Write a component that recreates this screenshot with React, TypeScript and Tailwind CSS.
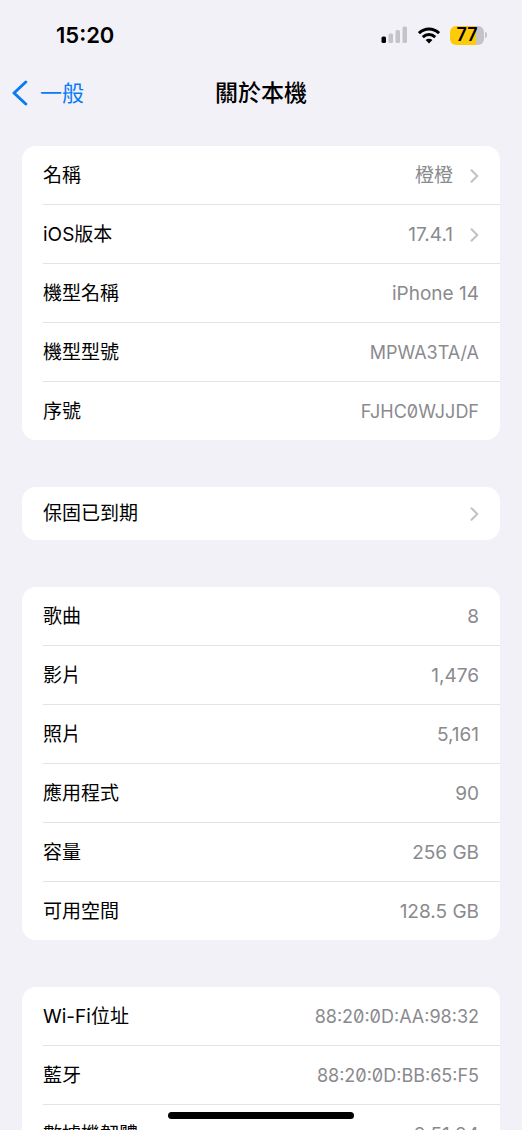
import React from 'react';

interface InfoRow {
  label: string;
  value?: string;
  link?: boolean;
  code?: boolean;
}

const groups: InfoRow[][] = [
  [
    { label: '名稱', value: '橙橙', link: true },
    { label: 'iOS版本', value: '17.4.1', link: true },
    { label: '機型名稱', value: 'iPhone 14' },
    { label: '機型型號', value: 'MPWA3TA/A', code: true },
    { label: '序號', value: 'FJHC0WJJDF', code: true },
  ],
  [{ label: '保固已到期', link: true }],
  [
    { label: '歌曲', value: '8' },
    { label: '影片', value: '1,476' },
    { label: '照片', value: '5,161' },
    { label: '應用程式', value: '90' },
    { label: '容量', value: '256 GB' },
    { label: '可用空間', value: '128.5 GB' },
  ],
  [
    { label: 'Wi-Fi位址', value: '88:20:0D:AA:98:32', code: true },
    { label: '藍牙', value: '88:20:0D:BB:65:F5', code: true },
    { label: '數據機韌體', value: '2.51.04' },
  ],
];

const StatusBar: React.FC = () => (
  <div className="flex h-[70px] items-center justify-between pl-14 pr-[35px]">
    <time className="text-[22px] font-semibold">15:20</time>
    <div className="flex items-center gap-2.5">
      <svg width="27" height="18" viewBox="0 0 27 18" aria-hidden="true">
        <rect x="0.5" y="10.5" width="4.5" height="6.5" rx="1.5" fill="#000" />
        <rect x="7.5" y="7.5" width="4.5" height="9.5" rx="1.5" fill="#c4c3c8" />
        <rect x="14.5" y="4" width="4.5" height="13" rx="1.5" fill="#c4c3c8" />
        <rect x="21.5" y="0.5" width="4.5" height="16.5" rx="1.5" fill="#c4c3c8" />
      </svg>
      <svg width="22" height="17" viewBox="0 0 22 17" aria-hidden="true">
        <g fill="none" stroke="#000" strokeWidth="3">
          <path d="M1 6.2C6.8 0.6 15.2 0.6 21 6.2" />
          <path d="M4.8 10.1C8.4 6.7 13.6 6.7 17.2 10.1" />
        </g>
        <path d="M11 16.5L7.6 13.1C9.5 11.4 12.5 11.4 14.4 13.1Z" fill="#000" />
      </svg>
      <div className="flex items-center gap-px">
        <div className="flex h-[19px] w-[34px] items-center justify-center rounded-md bg-linear-to-r from-[#fecb09] from-77% to-[#c4c3c8] to-77% text-lg font-semibold">
          77
        </div>
        <div className="h-1.5 w-0.5 rounded-r-full bg-[#c4c3c8]" />
      </div>
    </div>
  </div>
);

const Chevron: React.FC = () => (
  <svg className="ml-[17px]" width="9" height="14" viewBox="0 0 9 14" fill="none" aria-hidden="true">
    <path d="M1.5 1.2L7.3 7L1.5 12.8" stroke="#c2c2c5" strokeWidth="2" strokeLinecap="round" strokeLinejoin="round" />
  </svg>
);

const Row: React.FC<{ row: InfoRow; single: boolean }> = ({ row, single }) => {
  const content = (
    <>
      <span className="grow text-left text-[19px] leading-7">{row.label}</span>
      {row.value && (
        <span
          className={
            row.code
              ? 'text-[18px] leading-7 slashed-zero text-[#8a8a8e]'
              : 'text-[19px] leading-7 text-[#8a8a8e]'
          }
        >
          {row.value}
        </span>
      )}
      {row.link && <Chevron />}
    </>
  );
  const line = single
    ? 'flex w-full items-center pt-[13px] pb-3 pr-[21px]'
    : 'flex w-full items-center pt-4 pb-3.5 pr-[21px]';

  return (
    <li className="ml-[21px] border-b border-[#e3e3e5] last:border-b-0">
      {row.link ? (
        <button type="button" className={line}>
          {content}
        </button>
      ) : (
        <div className={line}>{content}</div>
      )}
    </li>
  );
};

export default function App() {
  return (
    <div
      className="h-screen overflow-hidden bg-[#f2f1f7] font-['Inter','Noto_Sans_CJK_TC',sans-serif] text-black"
      lang="zh-Hant"
    >
      <StatusBar />

      <header className="grid h-[46px] grid-cols-[1fr_auto_1fr] items-center px-3">
        <button type="button" className="flex items-center gap-3 text-[22px] text-[#087bf5]">
          <svg width="16" height="26" viewBox="0 0 16 26" fill="none" aria-hidden="true">
            <path d="M13.8 2L2 13L13.8 24" stroke="currentColor" strokeWidth="3" strokeLinecap="round" strokeLinejoin="round" />
          </svg>
          一般
        </button>
        <h1 className="text-[23px] font-medium">關於本機</h1>
      </header>

      <main className="flex flex-col gap-[47px] px-[22px] pt-[30px]">
        {groups.map((rows) => (
          <ul key={rows[0].label} className="rounded-[14px] bg-white">
            {rows.map((row) => (
              <Row key={row.label} row={row} single={rows.length === 1} />
            ))}
          </ul>
        ))}
      </main>

      {/* home indicator */}
      <div className="fixed bottom-[11px] left-1/2 h-[7px] w-[186px] -translate-x-1/2 rounded-full bg-black" />
    </div>
  );
}
